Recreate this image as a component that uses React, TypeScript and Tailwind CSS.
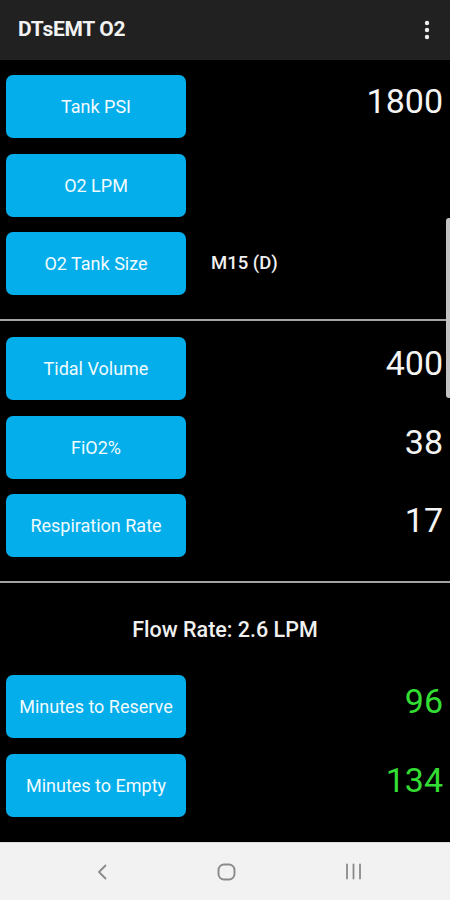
import React from 'react';

interface RowProps {
  label: string;
  value?: string;
  tone?: 'white' | 'green';
  small?: boolean;
}

const Row: React.FC<RowProps> = ({ label, value, tone = 'white', small }) => {
  return (
    <div className="flex items-center h-[63px]">
      <button className="w-[180px] h-full ml-[6px] rounded-[7px] bg-[#03aeea] text-[#f2fbff] text-[18px] font-normal shrink-0">
        {label}
      </button>
      {small ? (
        <span className="ml-[25px] text-[18.5px] font-medium text-[#f0f0f0]">{value}</span>
      ) : (
        <span
          className={`flex-1 text-right pr-[7px] mb-[11px] text-[34px] leading-none ${
            tone === 'green' ? 'text-[#33dd33]' : 'text-[#f4f4f4]'
          }`}
        >
          {value}
        </span>
      )}
    </div>
  );
};

const Divider = () => <div className="h-[2px] bg-[#a3a3a3]" />;

export default function App() {
  return (
    <div
      className="relative w-[450px] h-[900px] bg-black flex flex-col overflow-hidden"
      style={{ fontFamily: 'Roboto, "Noto Sans", sans-serif' }}
    >
      <header className="h-[60px] bg-[#212121] flex items-center justify-between pl-[18px] pr-[20px] shrink-0">
        <h1 className="text-[21px] font-bold text-[#f2f2f2] tracking-[-0.3px]">DTsEMT O2</h1>
        <svg width="6" height="20" viewBox="0 0 6 20" fill="#eeeeee">
          <circle cx="3" cy="3" r="2.2" />
          <circle cx="3" cy="10" r="2.2" />
          <circle cx="3" cy="17" r="2.2" />
        </svg>
      </header>

      <div className="flex-1 flex flex-col">
        <div className="flex flex-col gap-[15.5px] pt-[15px] pb-[24px]">
          <Row label="Tank PSI" value="1800" />
          <Row label="O2 LPM" value="" />
          <Row label="O2 Tank Size" value="M15 (D)" small />
        </div>
        <Divider />
        <div className="flex flex-col gap-[15.5px] pt-[16px] pb-[24px]">
          <Row label="Tidal Volume" value="400" />
          <Row label="FiO2%" value="38" />
          <Row label="Respiration Rate" value="17" />
        </div>
        <Divider />
        <div className="flex justify-center pt-[31px] pb-[29px]">
          <span className="text-[21.5px] font-medium text-[#f0f0f0]">Flow Rate: 2.6 LPM</span>
        </div>
        <div className="flex flex-col gap-[15.5px]">
          <Row label="Minutes to Reserve" value="96" tone="green" />
          <Row label="Minutes to Empty" value="134" tone="green" />
        </div>
      </div>

      <nav className="h-[58px] bg-[#f2f2f2] border-t border-[#dcdcdc] flex items-center justify-between pl-[97px] pr-[88px] shrink-0">
        <svg width="10" height="16" viewBox="0 0 10 16" fill="none" stroke="#8a8a8a" strokeWidth="1.8" strokeLinecap="round" strokeLinejoin="round">
          <path d="M8.5 1.5 L2 8 L8.5 14.5" />
        </svg>
        <svg width="19" height="18" viewBox="0 0 19 18" fill="none" stroke="#8a8a8a" strokeWidth="1.9">
          <rect x="1.5" y="1.5" width="16" height="15" rx="5.5" />
        </svg>
        <svg width="17" height="17" viewBox="0 0 17 17" fill="none" stroke="#8a8a8a" strokeWidth="1.8" strokeLinecap="round">
          <path d="M2 1.5 V15.5 M8.5 1.5 V15.5 M15 1.5 V15.5" />
        </svg>
      </nav>

      <div className="absolute right-0 top-[218px] w-[4px] h-[180px] bg-[#c4c4c4] rounded-l-[3px]" />
    </div>
  );
}
